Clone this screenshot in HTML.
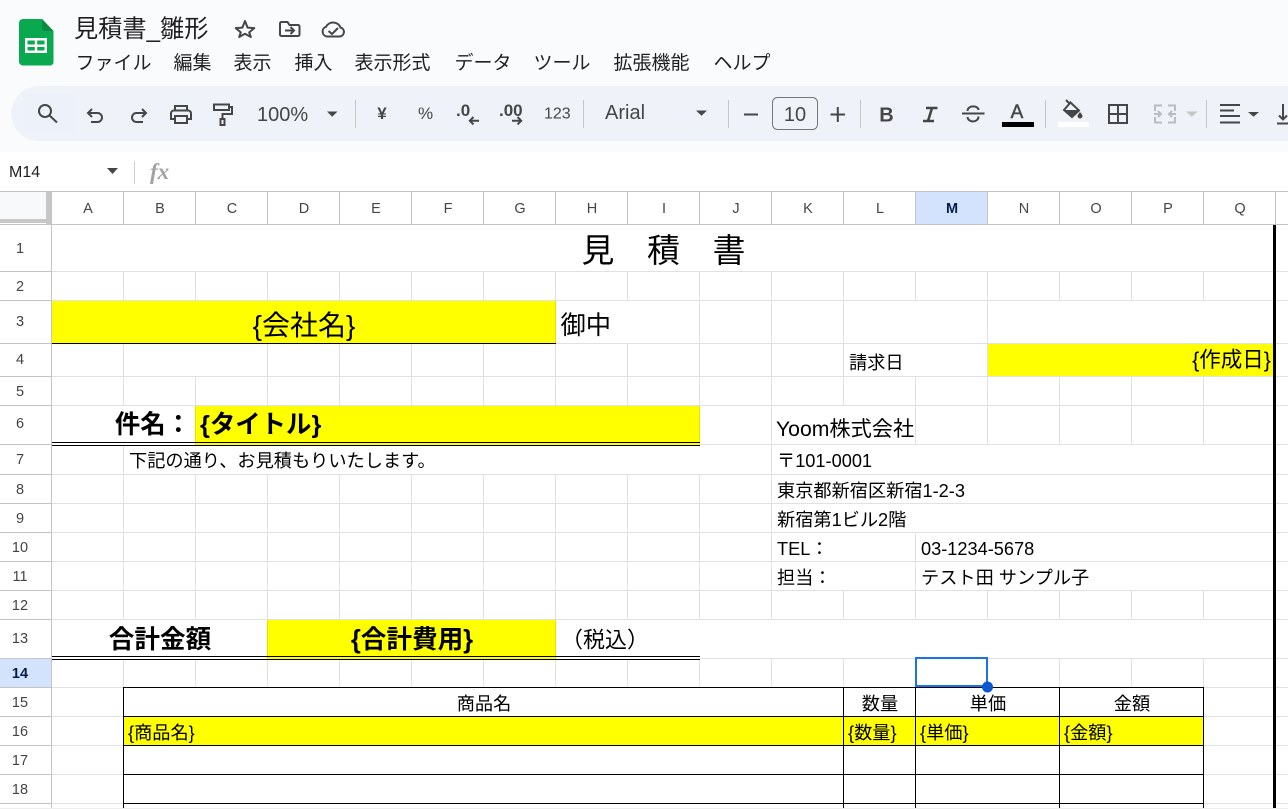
<!DOCTYPE html>
<html lang="ja"><head><meta charset="utf-8"><title>見積書_雛形</title>
<style>
html,body{margin:0;padding:0;width:1288px;height:809px;overflow:hidden;background:#fff}
svg{display:block;font-family:"Liberation Sans","Noto Sans CJK JP",sans-serif}
.h{font-size:14.5px;fill:#444;text-anchor:middle}
.m{font-size:19px;fill:#1f1f1f}
.c{fill:#000;font-size:18.2px}
.mid{text-anchor:middle}
.i{fill:none;stroke:#444746;stroke-width:2}
.t{fill:#444746}
.sep{stroke:#c7c7c7;stroke-width:1}
</style></head><body>
<svg width="1288" height="809" viewBox="0 0 1288 809" xmlns="http://www.w3.org/2000/svg">
<!-- chrome -->
<rect width="1288" height="152" fill="#f9fbfd"/>
<path d="M39 86H1288V141H39A27.5 27.5 0 0 1 39 86Z" fill="#eff2f8"/>
<rect x="24" y="94" width="50" height="39" fill="#edf1fa"/>
<!-- logo -->
<path d="M23 19H42L53.5 31V62A3.5 3.5 0 0 1 50 65.5H23A4 4 0 0 1 19 62V23A4 4 0 0 1 23 19Z" fill="#0aa84f"/>
<path d="M42 19L53.5 31H44.5A2.5 2.5 0 0 1 42 28.5Z" fill="#0b8a41"/>
<path d="M25 38H47V53H25ZM27.5 40.5V44.5H34.8V40.5ZM37.2 40.5V44.5H44.5V40.5ZM27.5 47V50.5H34.8V47ZM37.2 47V50.5H44.5V47Z" fill="#fff" fill-rule="evenodd"/>
<text x="74" y="37" font-size="24.2" fill="#1f1f1f">見積書_雛形</text>
<!-- star folder cloud -->
<path d="M245 21L247.6 27.6L254.3 28.1L249.2 32.4L250.8 37L245 33.7L239.2 37L240.8 32.4L235.7 28.1L242.4 27.6Z" class="i" stroke-linejoin="round"/>
<path d="M280 24V34.5A1.5 1.5 0 0 0 281.5 36H298A1.5 1.5 0 0 0 299.5 34.5V26.5A1.5 1.5 0 0 0 298 25H289.5L287.5 22H281.5A1.5 1.5 0 0 0 280 23.5Z" class="i"/>
<path d="M285 30.5H294M290.5 27L294 30.5L290.5 34" class="i"/>
<path d="M327 36.5A5 5 0 0 1 326 26.8A8 8 0 0 1 340.5 27.5A4.6 4.6 0 0 1 340 36.5Z" class="i"/>
<path d="M328.5 31L332 34L338 28" class="i"/>
<!-- menu -->
<text class="m" x="75.500" y="69">ファイル</text>
<text class="m" x="173.500" y="69">編集</text>
<text class="m" x="233.500" y="69">表示</text>
<text class="m" x="294.500" y="69">挿入</text>
<text class="m" x="354.500" y="69">表示形式</text>
<text class="m" x="454.500" y="69">データ</text>
<text class="m" x="533.500" y="69">ツール</text>
<text class="m" x="613.500" y="69">拡張機能</text>
<text class="m" x="713.500" y="69">ヘルプ</text>
<!-- toolbar -->
<circle cx="45" cy="111" r="6" class="i"/><path d="M49.5 115.5L57 122.5" class="i"/>
<path d="M92 109L88 113L92 117M88 113H97.5A4.5 4.5 0 0 1 97.5 122H91" class="i"/>
<path d="M142 109L146 113L142 117M146 113H136.5A4.5 4.5 0 0 0 136.5 122H143" class="i"/>
<path d="M175 110V106H187V110M175 119H171V113A3 3 0 0 1 174 110.5H188A3 3 0 0 1 191 113V119H187M175 116H187V123H175Z" class="i"/>
<path d="M214 104.5H229V110H214ZM229 107H232V114H222.5V119M220.5 119H224.5V125H220.5Z" class="i"/>
<text x="257" y="121" font-size="20" fill="#444746">100%</text>
<path d="M327 111.5H337.5L332.2 116.8Z" class="t"/>
<path class="sep" d="M355.5 100V128M583.5 100V128M728.5 100V128M860.5 100V128M1045.5 100V128M1206.5 100V128"/>
<text x="382" y="119" font-size="17" font-weight="700" class="t" style="text-anchor:middle">¥</text>
<text x="425.500" y="119" font-size="17" class="t" style="text-anchor:middle">%</text>
<text x="456" y="116" font-size="17" font-weight="700" class="t">.0</text>
<path d="M479 120.700H470M473.500 117L469.800 120.700L473.500 124.400" class="i"/>
<text x="499" y="116" font-size="17" font-weight="700" class="t">.00</text>
<path d="M512 120.700H521M517.500 117L521.200 120.700L517.500 124.400" class="i"/>
<text x="544" y="118.500" font-size="16" class="t">123</text>
<text x="605" y="119" font-size="20" class="t">Arial</text>
<path d="M696 110.500H707L701.500 115.800Z" class="t"/>
<path d="M744 114.500H758M830.500 114.500H845M837.800 107V122" class="i"/>
<rect x="772.500" y="97.500" width="45" height="32" rx="5" fill="none" stroke="#747775"/>
<text x="795" y="121" font-size="20" class="t" style="text-anchor:middle">10</text>
<text x="886.500" y="121.500" font-size="20" font-weight="700" class="t" style="text-anchor:middle">B</text>
<path d="M926 108H937.500M923 121H934M932 108L928 121" class="i" style="stroke-width:2.6"/>
<path d="M962 113.500H984.500M967.500 111C967.500 105 978.500 105 978.500 110M967.500 117C968 123 978.500 123 978.500 116.500" class="i"/>
<text x="1017" y="118" font-size="19" class="t" stroke="#444746" stroke-width=".5" style="text-anchor:middle">A</text>
<rect x="1002" y="122" width="32" height="5" fill="#000"/>
<path d="M1066 100L1070 104" class="i"/>
<path d="M1070.500 102.500L1079 110.500L1072 117L1064 110Z" class="i"/>
<path d="M1064 110H1079L1072 117Z" class="t"/>
<path d="M1080 112C1078.500 114 1077.500 115 1077.500 116A2.500 2.500 0 0 0 1082.500 116C1082.500 115 1081.500 114 1080 112Z" class="t"/>
<rect x="1058" y="122" width="31" height="5" fill="#fff"/>
<path d="M1109 105H1127V123H1109ZM1118 105V123M1109 114H1127" class="i"/>
<path d="M1155 111V105.500H1162M1155 117V122.500H1162M1175 111V105.500H1168M1175 117V122.500H1168M1154 114H1161M1158 111L1161 114L1158 117M1176 114H1169M1172 111L1169 114L1172 117" fill="none" stroke="#babdbd" stroke-width="2"/>
<path d="M1186 111.500H1197.500L1191.800 116.800Z" fill="#c4c7c5"/>
<path d="M1220 105H1240M1220 110.500H1234M1220 116H1240M1220 122.500H1240" class="i"/>
<path d="M1248 112H1259L1253.500 116.800Z" class="t"/>
<path d="M1277 123.500H1288M1283 104V119M1279 115.500L1283 119.500L1287 115.500" class="i"/>
<!-- formula bar -->
<text x="9" y="177" font-size="16" fill="#1f1f1f">M14</text>
<path d="M107 168H118L112.500 174Z" class="t"/>
<path d="M134.500 161V184" stroke="#d0d0d0"/>
<text x="150" y="179" font-size="23" font-family="Liberation Serif,serif" font-style="italic" font-weight="700" fill="#a3a3a3">fx</text>
<!-- yellow fills -->
<g fill="#ffff00" stroke="#e6e300">
<rect x="51.500" y="300.500" width="504" height="43"/>
<rect x="987.500" y="343.500" width="286" height="33"/>
<rect x="195.500" y="405.500" width="504" height="40"/>
<rect x="267.500" y="619.500" width="288" height="40"/>
</g>
<rect x="123" y="716" width="1080" height="29" fill="#ffff00"/>
<!-- grid -->
<path fill="none" stroke="#e1e1e1" d="
M52 271.500H1288M52 300.500H1288M52 343.500H1288M52 376.500H1288M52 405.500H1288M700 444.500H1288M52 474.500H1288M52 503.500H1288M52 532.500H1288M52 561.500H1288M52 590.500H1288M52 619.500H1288M700 658.500H1288M52 687.500H1288M52 716.500H1288M52 745.500H1288M52 774.500H1288M52 803.500H1288
M123.500 271V300M123.500 343V405M123.500 445V619M123.500 659V687
M195.500 271V300M195.500 376V405M195.500 474V619M195.500 659V687
M267.500 271V300M267.500 343V405M267.500 474V619M267.500 659V687
M339.500 271V300M339.500 343V405M339.500 474V619M339.500 659V687
M411.500 271V300M411.500 343V405M411.500 474V619M411.500 659V687
M483.500 271V300M483.500 343V405M483.500 474V619M483.500 659V687
M555.500 271V300M555.500 344V405M555.500 474V619M555.500 659V687
M627.500 271V300M627.500 343V405M627.500 474V619M627.500 659V687
M699.500 271V405M699.500 474V619M699.500 659V687
M771.500 271V619M771.500 659V687
M843.500 271V405M843.500 590V619M843.500 659V687
M915.500 271V300M915.500 376V444M915.500 532V619M915.500 659V687
M987.500 271V444M987.500 590V619M987.500 659V687
M1059.500 271V300M1059.500 376V444M1059.500 590V619M1059.500 659V687
M1131.500 271V300M1131.500 376V444M1131.500 590V619M1131.500 659V687
M1203.500 271V300M1203.500 376V444M1203.500 590V619M1203.500 659V687
"/>
<!-- row/column headers -->
<rect x="916" y="192" width="71" height="32" fill="#d3e3fd"/>
<rect x="0" y="659" width="51" height="28" fill="#d3e3fd"/>
<rect x="0" y="192" width="46" height="27" fill="#f8f9fa"/>
<rect x="46" y="192" width="5" height="32" fill="#c7c7c7"/>
<rect x="0" y="219" width="46" height="4" fill="#c7c7c7"/>
<path fill="none" stroke="#c4c4c4" d="M0 191.500H1288M0 224.500H1288M51.500 192V809
M123.500 192V224M195.500 192V224M267.500 192V224M339.500 192V224M411.500 192V224M483.500 192V224M555.500 192V224M627.500 192V224M699.500 192V224M771.500 192V224M843.500 192V224M915.500 192V224M987.500 192V224M1059.500 192V224M1131.500 192V224M1203.500 192V224M1275.500 192V224
M0 271.500H51M0 300.500H51M0 343.500H51M0 376.500H51M0 405.500H51M0 444.500H51M0 474.500H51M0 503.500H51M0 532.500H51M0 561.500H51M0 590.500H51M0 619.500H51M0 658.500H51M0 687.500H51M0 716.500H51M0 745.500H51M0 774.500H51M0 803.500H51"/>
<g class="h">
<text x="88" y="213">A</text><text x="160" y="213">B</text><text x="232" y="213">C</text><text x="304" y="213">D</text><text x="376" y="213">E</text><text x="448" y="213">F</text><text x="520" y="213">G</text><text x="592" y="213">H</text><text x="664" y="213">I</text><text x="736" y="213">J</text><text x="808" y="213">K</text><text x="880" y="213">L</text>
<text x="952" y="213" font-weight="700" style="fill:#041e49">M</text>
<text x="1024" y="213">N</text><text x="1096" y="213">O</text><text x="1168" y="213">P</text><text x="1240" y="213">Q</text>
<text x="20" y="253">1</text><text x="20" y="291">2</text><text x="20" y="326">3</text><text x="20" y="364">4</text><text x="20" y="396">5</text><text x="20" y="428">6</text><text x="20" y="464">7</text><text x="20" y="494">8</text><text x="20" y="523">9</text><text x="20" y="552">10</text><text x="20" y="581">11</text><text x="20" y="610">12</text><text x="20" y="643">13</text>
<text x="20" y="678" font-weight="700" style="fill:#041e49">14</text>
<text x="20" y="707">15</text><text x="20" y="736">16</text><text x="20" y="765">17</text><text x="20" y="794">18</text>
</g>
<!-- black borders -->
<path fill="none" stroke="#000" d="M52 343.500H556M52 442.500H700M52 445.500H700M52 656.500H700M52 659.500H700
M123 687.500H1204M123 716.500H1204M123 745.500H1204M123 774.500H1204M123 803.500H1204
M123.500 687V808M843.500 687V808M915.500 687V808M1059.500 687V808M1203.500 687V808"/>
<rect x="1273" y="225" width="3" height="583" fill="#000"/>
<!-- cell text -->
<text x="663.500" y="262" font-size="32.800" text-anchor="middle" fill="#000">見　積　書</text>
<text x="304" y="335" font-size="28" text-anchor="middle" fill="#000">{会社名}</text>
<text x="560.500" y="334" font-size="25.300" fill="#000">御中</text>
<text x="849" y="369" class="c">請求日</text>
<text x="1271" y="367" font-size="21.500" text-anchor="end" fill="#000">{作成日}</text>
<text x="191" y="433" font-size="25.400" font-weight="700" text-anchor="end" fill="#000">件名：</text>
<text x="200" y="433" font-size="25.400" font-weight="700" fill="#000">{タイトル}</text>
<text x="129" y="467" class="c">下記の通り、お見積もりいたします。</text>
<text x="776" y="436" font-size="21.200" fill="#000">Yoom株式会社</text>
<text x="777" y="467" class="c">〒101-0001</text>
<text x="777" y="497" class="c">東京都新宿区新宿1-2-3</text>
<text x="777" y="526" class="c">新宿第1ビル2階</text>
<text x="777" y="555" class="c">TEL：</text>
<text x="921" y="555" class="c">03-1234-5678</text>
<text x="777" y="584" class="c">担当：</text>
<text x="921" y="584" class="c">テスト田 サンプル子</text>
<text x="160" y="648" font-size="25.600" font-weight="700" text-anchor="middle" fill="#000">合計金額</text>
<text x="412" y="648" font-size="25.600" font-weight="700" text-anchor="middle" fill="#000">{合計費用}</text>
<text x="561" y="647.500" font-size="22" fill="#000">（税込）</text>
<text x="484" y="710" class="c mid">商品名</text>
<text x="880" y="710" class="c mid">数量</text>
<text x="988" y="710" class="c mid">単価</text>
<text x="1132" y="710" class="c mid">金額</text>
<text x="128" y="739" class="c">{商品名}</text>
<text x="848" y="739" class="c">{数量}</text>
<text x="920" y="739" class="c">{単価}</text>
<text x="1064" y="739" class="c">{金額}</text>
<!-- selection -->
<rect x="916" y="658" width="71" height="28" fill="none" stroke="#1a73e8" stroke-width="2"/>
<circle cx="987.500" cy="687" r="5.500" fill="#0b57d0"/>
<rect x="0" y="808" width="1288" height="1" fill="#eeeeee"/>
</svg>
</body></html>
